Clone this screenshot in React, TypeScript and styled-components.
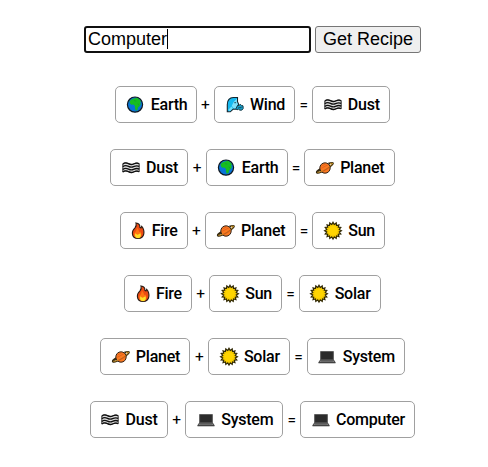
import React, { useState } from "react";
import styled, { createGlobalStyle } from "styled-components";

const GlobalStyle = createGlobalStyle`
  * { box-sizing: border-box; }
  body {
    margin: 0;
    background: #fff;
    color: #000;
    overflow: hidden;
    font-family: Roboto, sans-serif;
    font-size: 16px;
  }
`;

const Page = styled.main`
  width: 505px;
  padding-top: 26px;
  display: flex;
  flex-direction: column;
  align-items: center;
`;

const SearchForm = styled.form`
  display: flex;
  gap: 4px;
  height: 27px;
  margin: 0 0 33px;
`;

const Field = styled.div`
  position: relative;
  width: 227px;
`;

const SearchInput = styled.input`
  display: block;
  width: 100%;
  height: 27px;
  padding: 0 2px;
  border: 2px solid #101010;
  border-radius: 3px;
  outline: none;
  background: #fff;
  color: #000;
  font: 18px/23px "Liberation Sans", Arial, sans-serif;
`;

const Caret = styled.span`
  position: absolute;
  left: 83px;
  top: 3px;
  width: 1px;
  height: 20px;
  background: #000;
`;

const SubmitButton = styled.button`
  width: 106px;
  height: 27px;
  padding: 0;
  border: 1px solid #767676;
  border-radius: 3px;
  background: #efefef;
  color: #000;
  font: 18px/23px "Liberation Sans", Arial, sans-serif;
`;

const Recipes = styled.div`
  display: flex;
  flex-direction: column;
  align-items: center;
  gap: 26px;
`;

const Recipe = styled.div`
  display: flex;
  align-items: center;
  height: 37px;
`;

const Operator = styled.span<{ $width: number }>`
  width: ${(p) => p.$width}px;
  text-align: center;
  font-size: 15.5px;
  line-height: 20px;
`;

const Card = styled.div<{ $width: number }>`
  width: ${(p) => p.$width}px;
  height: 37px;
  display: flex;
  align-items: center;
  padding: 0 0 0 10.5px;
  border: 1px solid #a0a0a0;
  border-radius: 5px;
  background: #fff;
  font-weight: 500;
  letter-spacing: -0.25px;
  line-height: 20px;
  white-space: nowrap;
`;

const Glyph = styled.svg`
  flex: none;
  width: 18px;
  height: 18px;
  margin-right: 6.3px;
  overflow: visible;
`;

const FireGlyph = styled(Glyph)`
  width: 14px;
`;

const Globe = () => (
  <Glyph viewBox="0 0 18 18">
    <circle cx="9" cy="8.6" r="7.6" fill="#0874d8" stroke="#101820" strokeWidth="1.2" />
    <path d="M3.6 5.2 5.4 3.4 8 2.6l3-.8 2.6 1.6L15 5.6l-1 1.2 1 1.2-1.8 2.6-1.2 1-.5 2.3-1.7.8-.9-2.4.1-2.4-1.7-1.3-2 .1L4 7.6z" fill="#16bd20" />
    <path d="m8 4.5 2.2.7M12 7.6l.8 1.7" fill="none" stroke="#0e9434" strokeWidth=".6" />
  </Glyph>
);

const Wind = () => (
  <Glyph viewBox="0 0 18 18">
    <path d="M1.3 15.8V8.4C1.3 4.2 3.6 1.5 7.3 1.5h4.2v4.2l1.3 3-.9.9v2.6l-1.5 1.1-3.2-.2-2.9 2.7z" fill="#16b9f0" stroke="#14252e" strokeWidth="1.1" />
    <path d="M10.9 2.5v3.6l1 2.4-.9 1v2.3l-.8.7-2.8-.3-1.6-2.5 1.7-3.4z" fill="#7ce0fb" />
    <path d="m2.3 13.8 3.2-3.4 1.3 2-3 2.8z" fill="#72def8" />
    <path d="M8.3 6.7h1.8" stroke="#153b4c" strokeWidth=".9" />
    <path d="M11.5 9.5h1.8l.8-1.2 1.3 1.1 1.6.4.2 2.7-1.3 1.6-2 .1-1.3-1-1.6.6-1-1.2z" fill="#179fca" stroke="#173c49" strokeWidth="1" />
    <path d="M12.3 11.7h2.8l.6-1" fill="none" stroke="#173c49" strokeWidth=".8" />
  </Glyph>
);

const dustLine = (y: number) =>
  `M.8 ${y}C2.6 ${y - 1.4} 4.5 ${y - 1.3} 6.5 ${y - 0.3}s3.2 1.2 5 .3 3.5-1.5 5.7-.3`;

const Dust = () => (
  <Glyph viewBox="0 0 18 18">
    <path d="M.8 5C2.6 3.6 4.5 3.7 6.5 4.7s3.2 1.2 5 .3 3.5-1.5 5.7-.3v8c-2.2-1.2-3.9-.6-5.7.3s-3 .7-5-.3-3.9-1.1-5.7.3z" fill="#ddd" stroke="#222" strokeWidth=".9" />
    {[5, 7.7, 10.4, 13].map((y) => (
      <path key={y} d={dustLine(y)} fill="none" stroke="#101010" strokeWidth="1.3" />
    ))}
  </Glyph>
);

const Planet = () => (
  <Glyph viewBox="0 0 18 18">
    <path d="M4.4 10.2C1.7 11.9.4 13 1 13.6c.9.9 4.8-.8 9-3.4s7.4-5 6.9-5.9c-.5-.8-2.2-.3-4.5.5" fill="none" stroke="#30240c" strokeWidth="2" />
    <circle cx="9" cy="9" r="5.2" fill="#fa7921" stroke="#33251a" strokeWidth="1" />
    <path d="m5.4 7 4.2-2.1M5.2 9.3l6.7-3.5M7.2 12.4l5.5-3" stroke="#df5d1a" strokeWidth=".8" />
    <path d="M1.3 13.2c1.2.4 3.2-.4 5-1.3M13.5 7.4c1.8-1.3 3-2.4 3.1-3-.4-.4-1.4-.2-2.5.2" fill="none" stroke="#daa029" strokeWidth="1" />
    <path d="M5.6 12.6c2.4-.9 6-3.2 8.1-4.9" fill="none" stroke="#a65b18" strokeWidth=".8" />
  </Glyph>
);

const Fire = () => (
  <FireGlyph viewBox="0 0 14 18">
    <path d="M5 1c2.8.4 4.1 2.1 3.8 4.3l1.1.6.8-1.6c2.2 2.6 2.5 5.2 2.1 7.6-.5 2.8-2.6 4.6-5.7 4.6-3.4 0-5.5-2-5.7-4.9C1.2 9 2.4 7.2 4 5.8 5.2 4.4 5.6 2.8 5 1z" fill="#ed4b13" stroke="#281b14" strokeWidth="1.1" />
    <path d="M5.7 5.8c2 1.2 1.9 2.8 2.5 4.1l1.3-.5c1.6 2.7 1.1 5.8-2.2 6.6-4 .1-5-2.5-3.7-5.2 1.4-1.2 2.2-2.9 2.1-5z" fill="#ff7512" />
    <path d="M4.4 11.3c.8 1 2.1 1.8 2.8 1.2l2.2-1.2c1.2 2.5-.2 4.9-2.3 4.9-2.6 0-3.6-2.4-2.7-4.9z" fill="#ffe027" />
  </FireGlyph>
);

const sunPoints = Array.from({ length: 32 }, (_, i) => {
  const r = i % 2 ? 6.3 : 8.4;
  const a = (i * Math.PI) / 16;
  return `${9 + r * Math.sin(a)},${8.7 - r * Math.cos(a)}`;
}).join(" ");

const Sun = () => (
  <Glyph viewBox="0 0 18 18">
    <polygon points={sunPoints} fill="#ffd400" stroke="#302806" strokeWidth="1.2" />
    <circle cx="9" cy="8.7" r="5.1" fill="#ffd500" stroke="#eec200" strokeWidth=".6" />
  </Glyph>
);

const Laptop = () => (
  <Glyph viewBox="0 0 18 18">
    <path d="M2.6 3.5h12.8v8.3H2.6z" fill="#2b2b2b" stroke="#606060" strokeWidth="1" />
    <path d="M2.4 12h13.2l1.6 2.4H.8z" fill="#858585" stroke="#343434" strokeWidth=".8" />
    <path d="M.5 14.8h17" stroke="#333" strokeWidth=".9" />
    <path d="M3.2 13h11.6" stroke="#4b4b4b" strokeWidth=".7" />
  </Glyph>
);

const elements = {
  Earth: { Icon: Globe, width: 81.6 },
  Wind: { Icon: Wind, width: 81 },
  Dust: { Icon: Dust, width: 78 },
  Planet: { Icon: Planet, width: 90.4 },
  Fire: { Icon: Fire, width: 67.7 },
  Sun: { Icon: Sun, width: 72.6 },
  Solar: { Icon: Sun, width: 82 },
  System: { Icon: Laptop, width: 98 },
  Computer: { Icon: Laptop, width: 115 },
};

type Name = keyof typeof elements;

const steps: [Name, Name, Name][] = [
  ["Earth", "Wind", "Dust"],
  ["Dust", "Earth", "Planet"],
  ["Fire", "Planet", "Sun"],
  ["Fire", "Sun", "Solar"],
  ["Planet", "Solar", "System"],
  ["Dust", "System", "Computer"],
];

function Element({ name }: { name: Name }) {
  const { Icon, width } = elements[name];
  return (
    <Card $width={width}>
      <Icon />
      {name}
    </Card>
  );
}

export default function App() {
  const [query, setQuery] = useState("Computer");
  return (
    <>
      <GlobalStyle />
      <Page>
        <SearchForm onSubmit={(e) => e.preventDefault()}>
          <Field>
            <SearchInput value={query} onChange={(e) => setQuery(e.target.value)} />
            {query === "Computer" && <Caret />}
          </Field>
          <SubmitButton>Get Recipe</SubmitButton>
        </SearchForm>
        <Recipes>
          {steps.map(([a, b, result]) => (
            <Recipe key={`${a}-${b}`}>
              <Element name={a} />
              <Operator $width={17.7}>+</Operator>
              <Element name={b} />
              <Operator $width={16.8}>=</Operator>
              <Element name={result} />
            </Recipe>
          ))}
        </Recipes>
      </Page>
    </>
  );
}
